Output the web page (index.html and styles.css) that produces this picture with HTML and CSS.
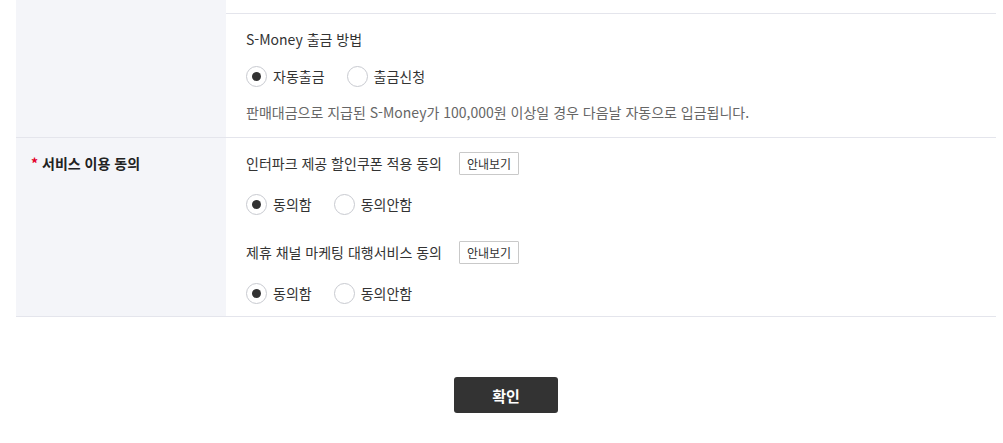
FILE: index.html
```html
<!DOCTYPE html>
<html lang="ko">
<head>
<meta charset="utf-8">
<link rel="stylesheet" href="styles.css">
</head>
<body>
<div class="page">
  <div class="form">
    <div class="row">
      <div class="th"></div>
      <div class="td">
        <div class="top-rest"></div>
        <div class="group g1">
          <div class="title">S-Money 출금 방법</div>
          <div class="radios r1">
            <label class="radio"><span class="circle on"></span><span>자동출금</span></label>
            <label class="radio"><span class="circle"></span><span>출금신청</span></label>
          </div>
          <p class="desc">판매대금으로 지급된 S-Money가 100,000원 이상일 경우 다음날 자동으로 입금됩니다.</p>
        </div>
      </div>
    </div>
    <div class="row bordered">
      <div class="th"><span class="req">*</span> 서비스 이용 동의</div>
      <div class="td">
        <div class="group g2">
          <div class="title">인터파크 제공 할인쿠폰 적용 동의 <button class="info">안내보기</button></div>
          <div class="radios r2">
            <label class="radio"><span class="circle on"></span><span>동의함</span></label>
            <label class="radio"><span class="circle"></span><span>동의안함</span></label>
          </div>
          <div class="title t2">제휴 채널 마케팅 대행서비스 동의 <button class="info">안내보기</button></div>
          <div class="radios r2">
            <label class="radio"><span class="circle on"></span><span>동의함</span></label>
            <label class="radio"><span class="circle"></span><span>동의안함</span></label>
          </div>
        </div>
      </div>
    </div>
  </div>
  <div class="actions"><button class="confirm">확인</button></div>
</div>
</body>
</html>
```
FILE: styles.css
```css
* { box-sizing: border-box; }
html, body { margin: 0; padding: 0; background: #fff; }
body {
  font-family: "Noto Sans CJK KR", "Noto Sans", sans-serif;
  color: #333;
  font-size: 14px;
}
.page { width: 980px; margin-left: 16px; }
.form { border-bottom: 1px solid #e4e5ec; }
.row { display: flex; }
.row.bordered { border-top: 1px solid #e4e5ec; }
.th {
  width: 210px;
  flex: none;
  background: #f4f5f9;
  padding: 14px 15px;
  font-weight: bold;
  line-height: 22px;
  color: #222;
}
.req { color: #e4002b; }
.td { flex: 1; }
.top-rest { height: 14px; border-bottom: 1px solid #e4e5ec; }
.group { padding: 14px 20px 14px; }
.title {
  display: flex;
  align-items: center;
  height: 22px;
  line-height: 22px;
}
.info {
  margin-left: 17px;
  height: 23px;
  width: 60px;
  padding: 0;
  border: 1px solid #c9c9c9;
  background: #fff;
  font-family: inherit;
  font-size: 12px;
  color: #333;
  border-radius: 1px;
}
.radios { display: flex; align-items: center; height: 22px; }
.r1 { margin-top: 15px; }
.r2 { margin-top: 19px; }
.t2 { margin-top: 26px; }
.radio { display: flex; align-items: center; margin-right: 22px; cursor: pointer; }
.circle {
  width: 21px;
  height: 21px;
  border: 1px solid #c8cad0;
  border-radius: 50%;
  margin-right: 6px;
  display: flex;
  align-items: center;
  justify-content: center;
  background: #fff;
}
.circle.on::after {
  content: "";
  width: 9px;
  height: 9px;
  border-radius: 50%;
  background: #333;
}
.desc {
  margin: 14px 0 0;
  line-height: 22px;
  color: #666;
}
.g2 { padding-bottom: 12px; }
.actions { display: flex; justify-content: center; padding-top: 60px; }
.confirm {
  width: 104px;
  height: 36px;
  background: #333;
  color: #fff;
  border: none;
  border-radius: 3px;
  font-family: inherit;
  font-size: 15px;
  font-weight: bold;
}
```
